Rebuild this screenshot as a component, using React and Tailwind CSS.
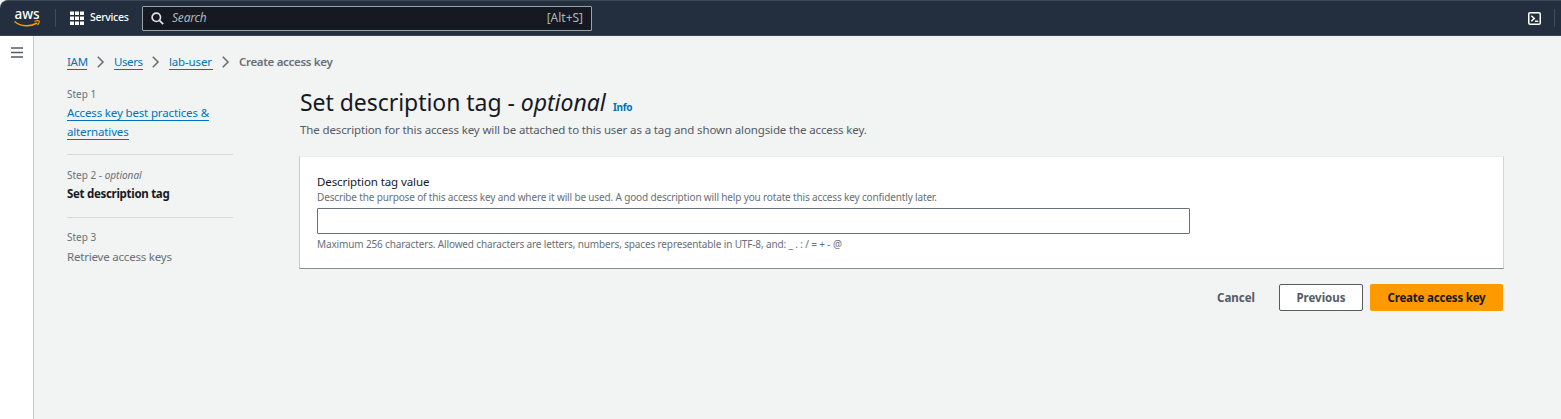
import React from "react";

function Chevron() {
  return (
    <svg className="block h-[14px] w-[9px] shrink-0" viewBox="0 0 9 14" fill="none" stroke="#687078" strokeWidth="1.6">
      <path d="M.8 1.8 6 7 .8 12.200" />
    </svg>
  );
}

function AwsLogo() {
  return (
    <div className="flex w-[26px] flex-col items-center">
      <span className="h-[11px] text-[13.5px] leading-[10px] font-medium tracking-[-0.1px] text-white">aws</span>
      <svg className="block h-[8px] w-[26px]" viewBox="0 0 26 8" fill="none" stroke="#ff9900">
        <path d="M.5 1.5C7 6.800 16.500 7 23 3" strokeWidth="1.600" />
        <path d="M20.500 1.200c2-.6 4-.7 4.500-.2.400.6-.3 2.600-1.500 4" strokeWidth="1.200" />
      </svg>
    </div>
  );
}

function Header() {
  return (
    <header className="flex h-9 items-center rounded-tl-[8px] border-t border-b border-t-[#3d4855] border-b-[#38434f] bg-[#232f3e] pl-[14px]">
      <AwsLogo />
      <div className="ml-[15px] h-[18px] w-px bg-[#414d5c]" />
      <svg className="ml-[14px] block h-[14px] w-[14px]" viewBox="0 0 14 14" fill="#fff">
        {[0, 5, 10].map((y) => [0, 5, 10].map((x) => <rect key={`${x}-${y}`} x={x} y={y + 0.5} width="4" height="3.500" />))}
      </svg>
      <span className="ml-[6px] w-[38px] text-[10.5px] font-medium tracking-[-0.3px] whitespace-nowrap text-white">Services</span>
      <div className="ml-[14px] flex h-[25px] w-[450px] items-center rounded-[1px] border border-[#95a5a6] bg-[#161921] px-2">
        <svg className="block h-[13px] w-[13px]" viewBox="0 0 13 13" fill="none" stroke="#dfe3e6" strokeWidth="1.7">
          <circle cx="5.300" cy="5.300" r="4.200" />
          <path d="m8.400 8.400 3.800 3.800" />
        </svg>
        <span className="ml-2 text-[12px] tracking-[-0.2px] text-[#aab7b8] italic">Search</span>
        <span className="ml-auto text-[12px] tracking-[-0.02px] text-[#aab7b8]">[Alt+S]</span>
      </div>
      <svg className="mr-[13px] ml-auto block h-[13px] w-[13px]" viewBox="0 0 13 13" fill="none" stroke="#fff">
        <rect x=".75" y=".75" width="11.500" height="11.500" rx="1.300" strokeWidth="1.500" />
        <path d="m3.300 3.800 3 2.700-3 2.700M7 9.300h3.200" strokeWidth="1.500" />
      </svg>
      <div className="mr-[6px] h-[18px] w-px bg-[#414d5c]" />
    </header>
  );
}

function Breadcrumbs() {
  const link = "h-[16px] border-b border-[#0073bb] leading-[16px] whitespace-nowrap text-[#0073bb]";
  return (
    <nav className="flex h-4 items-center text-[11.5px]">
      <a className={`${link} w-[20px] tracking-[-0.3px]`}>IAM</a>
      <span className="ml-[10px]"><Chevron /></span>
      <a className={`${link} ml-[8px] w-[29px] tracking-[-0.4px]`}>Users</a>
      <span className="ml-[9px]"><Chevron /></span>
      <a className={`${link} ml-[8px] w-[44px] tracking-[-0.15px]`}>lab-user</a>
      <span className="ml-[9px]"><Chevron /></span>
      <span className="ml-[8px] font-semibold tracking-[-0.32px] whitespace-nowrap text-[#687078]">Create access key</span>
    </nav>
  );
}

function Steps() {
  const small = "text-[10px] leading-[14px] text-[#687078]";
  const link = "block h-[16px] w-fit border-b border-[#0073bb] leading-[16px] whitespace-nowrap tracking-[-0.15px] text-[#0073bb]";
  return (
    <aside className="w-[166px] shrink-0 text-[11.5px]">
      <div className="h-[68px] border-b border-[#d5dbdb]">
        <div className={small}>Step 1</div>
        <a className={`${link} mt-[4px]`}>Access key best practices &amp;</a>
        <a className={`${link} mt-[3px]`}>alternatives</a>
      </div>
      <div className="h-[63px] border-b border-[#d5dbdb] pt-[13px]">
        <div className={small}>Step 2 - <i>optional</i></div>
        <div className="mt-[4px] leading-[16px] font-bold tracking-[-0.3px] text-[#16191f]">Set description tag</div>
      </div>
      <div className="pt-[12px]">
        <div className={small}>Step 3</div>
        <div className="mt-[5px] leading-[16px] tracking-[-0.2px] text-[#687078]">Retrieve access keys</div>
      </div>
    </aside>
  );
}

function DescriptionForm() {
  return (
    <section className="ml-[66px] w-[1205px] shrink-0">
      <div className="flex h-[30px] items-baseline pl-px leading-[30px] whitespace-nowrap text-[#16191f]">
        <h1 className="w-[307px] text-[23px] font-normal tracking-[-0.04px]">Set description tag - <i>optional</i></h1>
        <a className="ml-[6px] text-[10px] font-bold tracking-[-0.3px] text-[#0073bb]">Info</a>
      </div>
      <p className="mt-[5px] pl-px text-[11.5px] leading-[16px] tracking-[-0.13px] whitespace-nowrap text-[#545b64]">
        The description for this access key will be attached to this user as a tag and shown alongside the access key.
      </p>
      <div className="mt-[18px] h-[113px] border border-t-[#eaeded] border-r-[#d0d5d8] border-b-[#879196] border-l-[#c4cccf] bg-white pt-[17px] pl-[17px]">
        <label className="block text-[11.5px] leading-[16px] tracking-[-0.1px] text-[#16191f]">Description tag value</label>
        <p className="text-[10px] leading-[14px] tracking-[-0.15px] text-[#687078]">
          Describe the purpose of this access key and where it will be used. A good description will help you rotate this access key confidently later.
        </p>
        <input aria-label="Description tag value" className="mt-[4px] block h-[26px] w-[873px] rounded-[1px] border border-[#687078] bg-white" />
        <p className="mt-[3px] text-[10px] leading-[14px] tracking-[-0.14px] text-[#687078]">
          Maximum 256 characters. Allowed characters are letters, numbers, spaces representable in UTF-8, and: _ . : / = + - @
        </p>
      </div>
      <div className="mt-[15px] flex h-[27px] items-center justify-end pr-px text-[11.5px] font-bold whitespace-nowrap text-[#545b64]">
        <button className="mr-[25px] w-[37px]">Cancel</button>
        <button className="mr-[7px] flex h-[27px] w-[84px] items-center justify-center rounded-[2px] border border-[#545b64] bg-white">Previous</button>
        <button className="flex h-[27px] w-[133px] items-center justify-center rounded-[2px] bg-[#ff9900] tracking-[-0.2px] text-[#16191f]">Create access key</button>
      </div>
    </section>
  );
}

export default function App() {
  return (
    <div className="h-[419px] w-[1561px] overflow-hidden bg-[#f2f3f3] font-['Noto_Sans',sans-serif]">
      <Header />
      <div className="flex h-[383px]">
        <div className="w-[34px] shrink-0 border-r border-[#c3c9cc] bg-white pt-[11px] pl-[11px]">
          <svg className="block h-[11px] w-[12px]" viewBox="0 0 12 11" stroke="#545b64" strokeWidth="1.500">
            <path d="M0 1h12M0 5.500h12M0 10h12" />
          </svg>
        </div>
        <main className="pt-[18px] pl-[33px]">
          <Breadcrumbs />
          <div className="mt-[17px] flex">
            <Steps />
            <DescriptionForm />
          </div>
        </main>
      </div>
    </div>
  );
}
